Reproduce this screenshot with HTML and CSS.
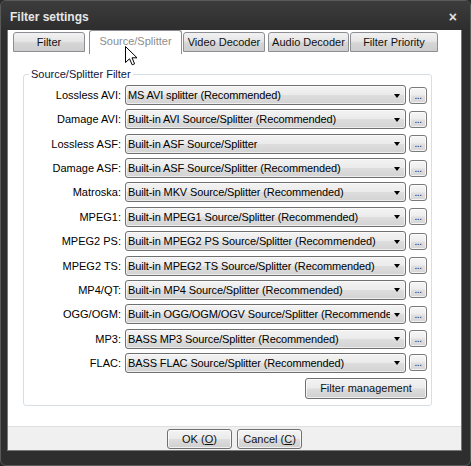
FILE: index.html
```html
<!DOCTYPE html>
<html>
<head>
<meta charset="utf-8">
<link rel="stylesheet" href="styles.css">
</head>
<body>
<div class="window">
  <div class="titlebar">
    <span class="title">Filter settings</span>
    <span class="close">×</span>
  </div>
  <div class="client">
    <div class="tabs">
      <div class="tab t1">Filter</div>
      <div class="tab sel t2">Source/Splitter</div>
      <div class="tab t3">Video Decoder</div>
      <div class="tab t4">Audio Decoder</div>
      <div class="tab t5">Filter Priority</div>
    </div>
    <div class="page">
      <fieldset class="group">
        <legend>Source/Splitter Filter</legend>
        <div class="rows">
          <div class="row"><span class="lbl">Lossless AVI:</span><div class="combo"><span class="val">MS AVI splitter (Recommended)</span><span class="arrow"></span></div><div class="dots">...</div></div>
          <div class="row"><span class="lbl">Damage AVI:</span><div class="combo"><span class="val">Built-in AVI Source/Splitter (Recommended)</span><span class="arrow"></span></div><div class="dots">...</div></div>
          <div class="row"><span class="lbl">Lossless ASF:</span><div class="combo"><span class="val">Built-in ASF Source/Splitter</span><span class="arrow"></span></div><div class="dots">...</div></div>
          <div class="row"><span class="lbl">Damage ASF:</span><div class="combo"><span class="val">Built-in ASF Source/Splitter (Recommended)</span><span class="arrow"></span></div><div class="dots">...</div></div>
          <div class="row"><span class="lbl">Matroska:</span><div class="combo"><span class="val">Built-in MKV Source/Splitter (Recommended)</span><span class="arrow"></span></div><div class="dots">...</div></div>
          <div class="row"><span class="lbl">MPEG1:</span><div class="combo"><span class="val">Built-in MPEG1 Source/Splitter (Recommended)</span><span class="arrow"></span></div><div class="dots">...</div></div>
          <div class="row"><span class="lbl">MPEG2 PS:</span><div class="combo"><span class="val">Built-in MPEG2 PS Source/Splitter (Recommended)</span><span class="arrow"></span></div><div class="dots">...</div></div>
          <div class="row"><span class="lbl">MPEG2 TS:</span><div class="combo"><span class="val">Built-in MPEG2 TS Source/Splitter (Recommended)</span><span class="arrow"></span></div><div class="dots">...</div></div>
          <div class="row"><span class="lbl">MP4/QT:</span><div class="combo"><span class="val">Built-in MP4 Source/Splitter (Recommended)</span><span class="arrow"></span></div><div class="dots">...</div></div>
          <div class="row"><span class="lbl">OGG/OGM:</span><div class="combo"><span class="val">Built-in OGG/OGM/OGV Source/Splitter (Recommended</span><span class="arrow"></span></div><div class="dots">...</div></div>
          <div class="row"><span class="lbl">MP3:</span><div class="combo"><span class="val">BASS MP3 Source/Splitter (Recommended)</span><span class="arrow"></span></div><div class="dots">...</div></div>
          <div class="row"><span class="lbl">FLAC:</span><div class="combo"><span class="val">BASS FLAC Source/Splitter (Recommended)</span><span class="arrow"></span></div><div class="dots">...</div></div>
        </div>
        <div class="mgmt-line"><div class="btn mgmt">Filter management</div></div>
      </fieldset>
    </div>
    <div class="footer">
      <div class="btn foot">OK (<u>O</u>)</div>
      <div class="btn foot">Cancel (<u>C</u>)</div>
    </div>
  </div>
  <svg class="cursor" width="13" height="20" viewBox="0 0 13 20"><path d="M0.5 0.5 L0.5 16.5 L4.5 12.8 L7.2 18.8 L9.6 17.8 L7 11.8 L12 11.8 Z" fill="#fff" stroke="#000" stroke-width="1" stroke-linejoin="miter"/></svg>
</div>
</body>
</html>
```
FILE: styles.css
```css
* { box-sizing: border-box; }
html, body { margin: 0; padding: 0; background: #2b2b2b; }
body { width: 471px; height: 466px; overflow: hidden; font-family: "Liberation Sans", Arial, sans-serif; font-size: 11px; color: #000; }

.window {
  position: relative;
  width: 471px; height: 466px;
  background: #2e2e2e;
  border: 1px solid #5a5a5a;
  border-radius: 6px;
  display: flex; flex-direction: column;
}
.titlebar {
  height: 29px;
  display: flex; align-items: center; justify-content: space-between;
  padding: 0 13px 0 9px;
  background: linear-gradient(#3c3c3c, #2e2e2e);
  border-radius: 5px 5px 0 0;
}
.title { color: #e6e6e6; font-weight: bold; font-size: 12px; padding-top: 2px; }
.close { color: #e0e0e0; font-weight: bold; font-size: 14px; line-height: 14px; padding-top: 2px; }

.client {
  margin-left: 6px;
  width: 455px;
  height: 421px;
  background: #fff;
  border: 1px solid #777;
  border-top: none;
  display: flex; flex-direction: column;
}
.tabs { height: 23px; display: flex; align-items: flex-end; padding-left: 5px; }
.tab {
  height: 20px;
  margin-bottom: 1px;
  border: 1px solid #8c8e94;
  border-radius: 3px 3px 0 0;
  background: linear-gradient(#f2f2f2, #e6e6e6 45%, #d6d6d6 55%, #cdcdcd);
  display: flex; align-items: center; justify-content: center;
  color: #111;
  padding-bottom: 1px;
}
.tab.sel {
  height: 24px;
  margin-bottom: -1px;
  background: #fff;
  border-bottom: none;
  color: #8d8d8d;
  padding-bottom: 4px;
}
.t1 { width: 72px; }
.t2 { width: 93px; margin-left: 4px; }
.t3 { width: 82px; margin-left: 1px; }
.t4 { width: 81px; margin-left: 3px; }
.t5 { width: 88px; margin-left: 1px; }

.page { height: 373px; padding: 14px 0 0 15px; }
.group {
  margin: 0;
  width: 409px;
  padding: 4px 4px 6px 0;
  border: 1px solid #d5dfe5;
  border-radius: 3px;
}
.group legend {
  margin-left: 5px;
  padding: 0 2px;
  line-height: 14px;
  height: 14px;
  font-size: 11px;
  color: #0d1640;
}
.rows { display: flex; flex-direction: column; gap: 4.36px; }
.row { display: flex; align-items: center; height: 20px; }
.lbl { width: 97px; text-align: right; margin-right: 4px; font-size: 11px; }
.combo {
  width: 281px; height: 20px;
  border: 1px solid #707070;
  border-radius: 3px;
  background: linear-gradient(#f3f3f3, #ebebeb 48%, #dddddd 52%, #d3d3d3);
  box-shadow: inset 0 0 0 1px rgba(255,255,255,0.6);
  display: flex; align-items: center;
  padding-left: 2px;
}
.val { flex: 1; min-width: 0; white-space: nowrap; overflow: hidden; font-size: 11px; letter-spacing: -0.12px; }
.arrow {
  flex: none;
  width: 0; height: 0;
  margin: 1px 5px 0 4px;
  border-left: 3.5px solid transparent;
  border-right: 3.5px solid transparent;
  border-top: 4px solid #000;
}
.dots {
  width: 18px; height: 17px;
  margin-left: 3px;
  border: 1px solid #7a7a7a;
  border-radius: 3px;
  background: linear-gradient(#f6f6f6, #ededed 48%, #e0e0e0 52%, #d6d6d6);
  box-shadow: inset 0 0 0 1px rgba(255,255,255,0.7);
  text-align: center;
  font-size: 10px;
  line-height: 15px;
  color: #102060;
  letter-spacing: -0.5px;
}
.mgmt-line { display: flex; justify-content: flex-end; margin-top: 5px; }
.btn {
  border: 1px solid #707070;
  border-radius: 3px;
  background: linear-gradient(#f3f3f3, #ebebeb 48%, #dddddd 52%, #cfcfcf);
  box-shadow: inset 0 0 0 1px rgba(255,255,255,0.7);
  display: flex; align-items: center; justify-content: center;
  font-size: 11px;
  color: #111;
}
.mgmt { width: 122px; height: 21px; }

.footer {
  height: 24px;
  background: #f0f0f0;
  border-top: 1px solid #dfdfdf;
  display: flex; justify-content: center; gap: 5px;
  padding-top: 2px;
}
.foot { width: 65px; height: 20px; }
.foot u { text-decoration: underline; }

.cursor { position: absolute; left: 124px; top: 45px; }
```
